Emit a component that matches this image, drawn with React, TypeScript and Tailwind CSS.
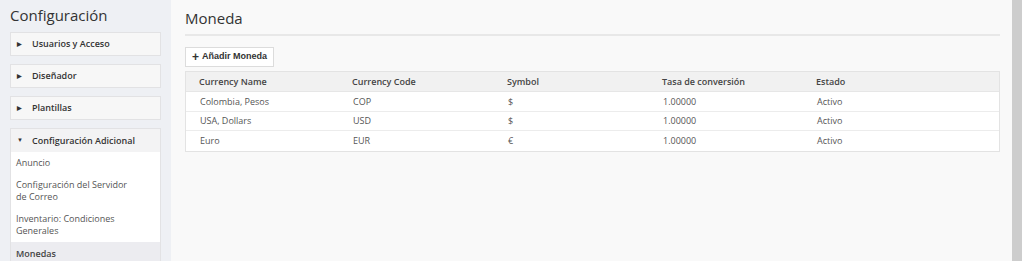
import React from 'react';

const rows = [
  { name: 'Colombia, Pesos', code: 'COP', symbol: '$', rate: '1.00000', estado: 'Activo' },
  { name: 'USA, Dollars', code: 'USD', symbol: '$', rate: '1.00000', estado: 'Activo' },
  { name: 'Euro', code: 'EUR', symbol: '€', rate: '1.00000', estado: 'Activo' },
];

const SidePanel = ({ label }: { label: string }) => (
  <div className="h-[24px] bg-[#f7f7f7] border border-[#e2e2e4] flex items-center pl-[6px] text-[#333] font-semibold">
    <span className="text-[6px] w-[15px]">▶</span>
    <span>{label}</span>
  </div>
);

const App = () => {
  return (
    <div className="w-[1024px] h-[261px] flex overflow-hidden text-[9px] text-[#444]" style={{ fontFamily: '"Open Sans", sans-serif' }}>
      <aside className="w-[171px] shrink-0 bg-[#eef0f4] pl-[10px] pr-[10px] pt-[5px] flex flex-col">
        <h2 className="text-[15px] text-[#333] leading-[20px] mb-[7px]">Configuración</h2>
        <div className="flex flex-col gap-[8px]">
          <SidePanel label="Usuarios y Acceso" />
          <SidePanel label="Diseñador" />
          <SidePanel label="Plantillas" />
          <div className="border border-[#e2e2e4] bg-white">
            <div className="h-[23px] bg-[#f3f3f4] flex items-center pl-[6px] text-[#333] font-semibold">
              <span className="text-[6px] w-[15px]">▼</span>
              <span>Configuración Adicional</span>
            </div>
            <div className="pl-[5px] text-[#555] leading-[12px]">
              <div className="py-[5px]">Anuncio</div>
              <div className="py-[5px]">Configuración del Servidor<br />de Correo</div>
              <div className="py-[5px]">Inventario: Condiciones<br />Generales</div>
            </div>
            <div className="h-[23px] bg-[#ececf0] flex items-center pl-[5px] font-semibold text-[#444]">Monedas</div>
          </div>
        </div>
      </aside>
      <main className="flex-1 bg-[#f9f9f9] pl-[14px] pr-[12px] pt-[8px]">
        <h1 className="text-[15px] text-[#333] leading-[20px] pb-[6px] border-b-2 border-[#e8e8e8]">Moneda</h1>
        <button className="mt-[11px] h-[20px] px-[6px] bg-white border border-[#dcdcdc] text-[9px] font-bold text-[#333] flex items-center gap-[3px]" style={{ fontFamily: '"Liberation Sans", sans-serif' }}>
          <span className="text-[12px] leading-none">+</span>
          <span>Añadir Moneda</span>
        </button>
        <div className="mt-[4px] border border-[#e3e3e3] bg-white">
          <div className="h-[20px] bg-[#f1f1f1] grid grid-cols-[153px_155px_155px_154px_1fr] items-center pl-[13px] font-semibold text-[#444] border-b border-[#e6e6e6]">
            <span>Currency Name</span>
            <span>Currency Code</span>
            <span>Symbol</span>
            <span>Tasa de conversión</span>
            <span>Estado</span>
          </div>
          {rows.map((r, i) => (
            <div key={r.code} className={`h-[19.5px] grid grid-cols-[153px_155px_155px_154px_1fr] items-center pl-[14px] text-[#555] ${i < rows.length - 1 ? 'border-b border-[#ececec]' : ''}`}>
              <span>{r.name}</span>
              <span>{r.code}</span>
              <span>{r.symbol}</span>
              <span>{r.rate}</span>
              <span>{r.estado}</span>
            </div>
          ))}
        </div>
      </main>
      <div className="w-[10px] bg-[#cdcdcd] shrink-0" />
      <div className="w-[2px] bg-white shrink-0" />
    </div>
  );
};

export default App;
